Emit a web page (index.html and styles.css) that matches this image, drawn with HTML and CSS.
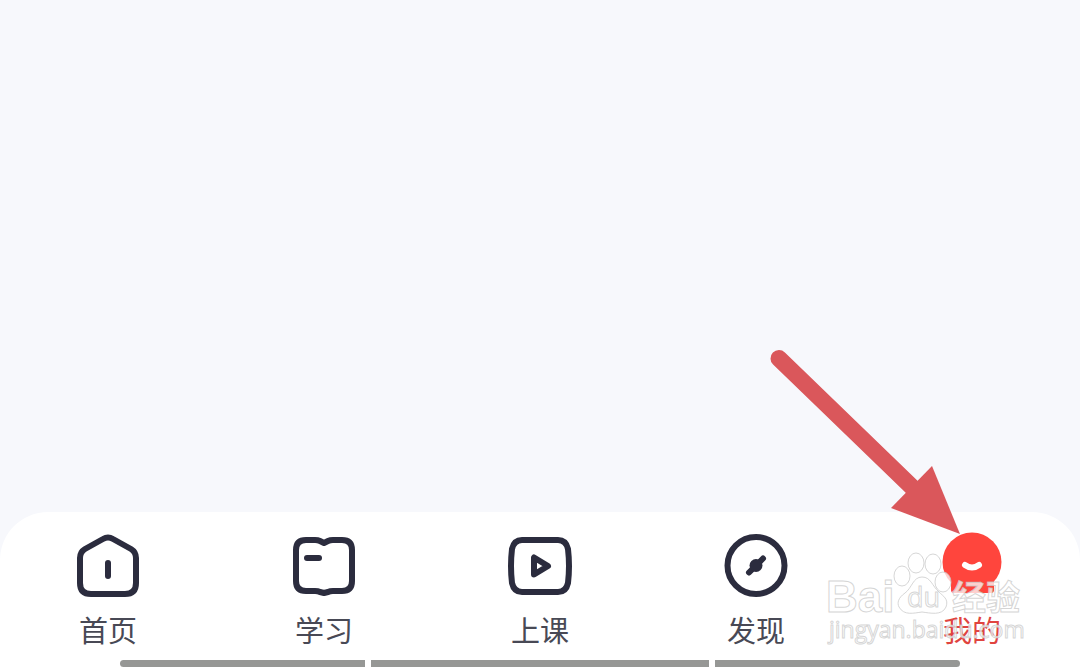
FILE: index.html
```html
<!DOCTYPE html>
<html lang="zh-CN">
  <head>
    <meta charset="UTF-8" />
    <meta name="viewport" content="width=device-width, initial-scale=1.0" />
    <title>我的</title>
    <link rel="stylesheet" href="styles.css">
  </head>

  <body>
    <main class="content"></main>

    <footer class="tabbar">
      <nav class="tabs">
        <a class="tab" href="#home">
          <svg class="icon" viewBox="0 0 72 72" aria-hidden="true">
            <path d="M31 9 Q36 6 41 9 L59 19 Q64 22 64 28 V53 Q64 64 53 64 H19 Q8 64 8 53 V28 Q8 22 13 19 Z" />
            <path d="M36 33 V46" />
          </svg>
          <span>首页</span>
        </a>
        <a class="tab" href="#study">
          <svg class="icon" viewBox="0 0 72 72" aria-hidden="true">
            <path d="M36 13 L32 11 Q30 10 27 10 H18 Q8 10 8 20 V51 Q8 61 18 61 H27 Q30 61 32 62 L36 63 L40 62 Q42 61 45 61 H54 Q64 61 64 51 V20 Q64 10 54 10 H45 Q42 10 40 11 Z" />
            <path d="M19 28 H31" />
          </svg>
          <span>学习</span>
        </a>
        <a class="tab" href="#class">
          <svg class="icon" viewBox="0 0 72 72" aria-hidden="true">
            <path d="M18 10 H54 Q62 10 64 19 Q66 36 64 53 Q62 62 54 62 H18 Q10 62 8 53 Q6 36 8 19 Q10 10 18 10 Z" />
            <path d="M30 27.5 V44.5 L44 36 Z" />
          </svg>
          <span>上课</span>
        </a>
        <a class="tab" href="#discover">
          <svg class="icon" viewBox="0 0 72 72" aria-hidden="true">
            <circle cx="36" cy="35.5" r="28.5" />
            <path d="M29 42.5 L43 28.5" />
            <circle class="dot" cx="36" cy="35.5" r="6.5" />
          </svg>
          <span>发现</span>
        </a>
        <a class="tab active" href="#me">
          <svg class="icon" viewBox="0 0 72 72" aria-hidden="true">
            <circle class="face" cx="36" cy="32" r="29.5" />
            <path class="face" d="M15 48 H58 V60 Q58 63 55 63 H18 Q15 63 15 60 Z" />
            <path class="smile" d="M29 35 Q36 40 43 35" />
          </svg>
          <span>我的</span>
        </a>
      </nav>

      <div class="indicator">
        <i class="short"></i>
        <i class="long"></i>
        <i class="short"></i>
      </div>

      <svg class="arrow" viewBox="0 0 200 190" aria-hidden="true">
        <path class="shaft" d="M14 13.5 L150 145" />
        <path class="head" d="M195 189 L167 121 L126 163 Z" />
      </svg>

      <svg class="watermark" viewBox="0 0 210 100">
        <ellipse cx="82" cy="26" rx="8" ry="10" />
        <ellipse cx="96" cy="13" rx="8" ry="10" />
        <ellipse cx="113" cy="14" rx="8" ry="10" />
        <ellipse cx="123" cy="32" rx="8" ry="10" />
        <path d="M102 27 C93 27 92 38 85 43 C78 48 77 53 79 57 C84 66 94 63 102 62 C110 63 122 66 126 57 C129 49 123 46 119 42 C112 36 111 27 102 27 Z" />
        <text class="brand" x="6" y="62">Bai</text>
        <text class="du" x="87" y="57">du</text>
        <text class="cn" x="132" y="60">经验</text>
        <text class="url" x="9" y="88">jingyan.baidu.com</text>
      </svg>
    </footer>
  </body>
</html>
```
FILE: styles.css
```css
body {
  font-family: "Noto Sans CJK SC", sans-serif;
  margin: 0;
  min-height: 100vh;
  display: flex;
  flex-direction: column;
  background-color: #f7f8fc;
}

.content {
  flex: 1;
}

.tabbar {
  position: relative;
  background-color: #fff;
  border-radius: 48px 48px 0 0;
  padding-top: 18px;
}

.tabs {
  display: flex;
}

.tab {
  flex: 1;
  display: flex;
  flex-direction: column;
  align-items: center;
  gap: 7px;
  color: #484955;
  font-size: 29px;
  line-height: 40px;
  text-decoration: none;
}

.tab.active {
  color: #e0443f;
}

.icon {
  width: 72px;
  height: 72px;
  fill: none;
  stroke: #2b2c3e;
  stroke-width: 6;
  stroke-linecap: round;
  stroke-linejoin: round;
}

.icon .dot {
  fill: #2b2c3e;
  stroke: none;
}

.icon .face {
  fill: #ff453d;
  stroke: none;
}

.icon .smile {
  stroke: #fff;
  stroke-width: 6;
}

.indicator {
  display: flex;
  gap: 6px;
  margin: 11px 120px 1px;
}

.indicator i {
  height: 7px;
  background-color: #969795;
}

.indicator .short {
  flex: 245;
}

.indicator .long {
  flex: 338;
}

.indicator .short:first-child {
  border-radius: 4px 0 0 4px;
}

.indicator .short:last-child {
  border-radius: 0 4px 4px 0;
}

/* pointer lying over the last tab */
.arrow {
  position: absolute;
  right: 115px;
  bottom: 133px;
  width: 200px;
  height: 190px;
  pointer-events: none;
}

.arrow .shaft {
  stroke: #da575b;
  stroke-width: 17;
  stroke-linecap: round;
}

.arrow .head {
  fill: #da575b;
}

.watermark {
  position: absolute;
  right: 50px;
  bottom: 18px;
  width: 210px;
  height: 100px;
  pointer-events: none;
  fill: rgba(255, 255, 255, 0.75);
  stroke: rgba(200, 200, 200, 0.75);
  stroke-width: 1;
  font-family: "Open Sans", "Noto Sans CJK SC", sans-serif;
}

.brand {
  font-family: "Liberation Sans", sans-serif;
  font-size: 44px;
  font-weight: bold;
}

.du {
  font-size: 27px;
  font-weight: normal;
}

.cn {
  font-size: 34px;
  font-weight: bold;
}

.url {
  font-size: 23px;
}
```
